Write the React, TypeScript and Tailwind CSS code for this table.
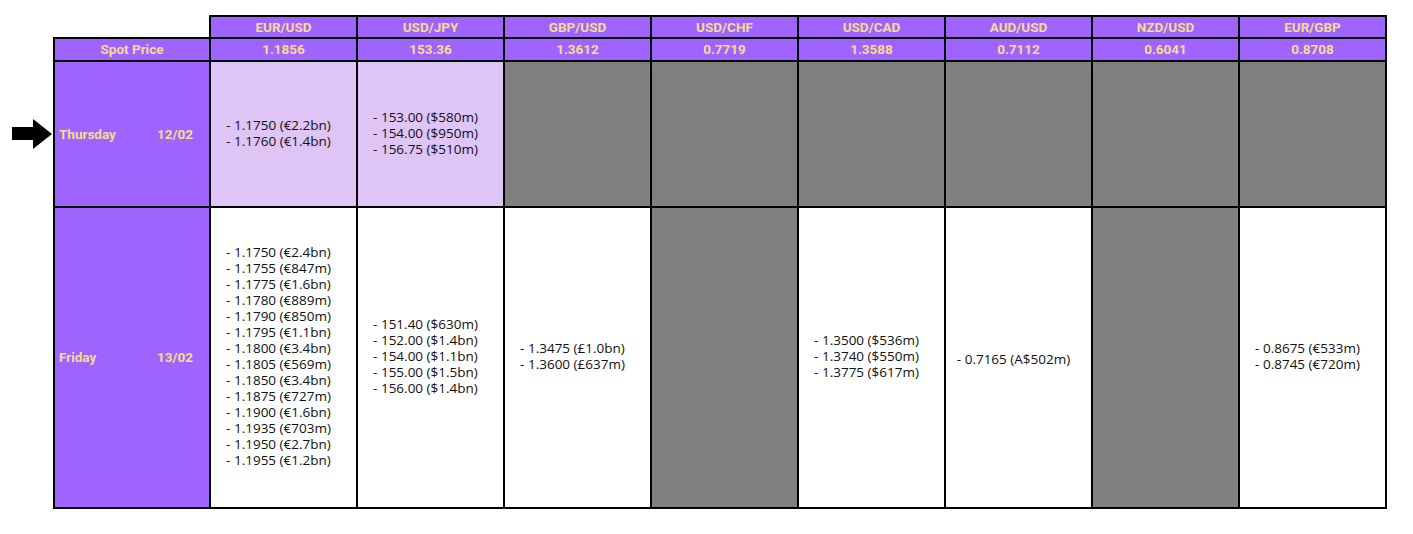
const pairs = [
  { pair: "EUR/USD", spot: "1.1856" },
  { pair: "USD/JPY", spot: "153.36" },
  { pair: "GBP/USD", spot: "1.3612" },
  { pair: "USD/CHF", spot: "0.7719" },
  { pair: "USD/CAD", spot: "1.3588" },
  { pair: "AUD/USD", spot: "0.7112" },
  { pair: "NZD/USD", spot: "0.6041" },
  { pair: "EUR/GBP", spot: "0.8708" },
]

// null = no expiries (grey cell)
const rows: { day: string; date: string; arrow?: boolean; height: string; cells: (string[] | null)[] }[] = [
  {
    day: "Thursday",
    date: "12/02",
    arrow: true,
    height: "h-[146px]",
    cells: [
      ["1.1750 (€2.2bn)", "1.1760 (€1.4bn)"],
      ["153.00 ($580m)", "154.00 ($950m)", "156.75 ($510m)"],
      null,
      null,
      null,
      null,
      null,
      null,
    ],
  },
  {
    day: "Friday",
    date: "13/02",
    height: "h-[301px]",
    cells: [
      [
        "1.1750 (€2.4bn)",
        "1.1755 (€847m)",
        "1.1775 (€1.6bn)",
        "1.1780 (€889m)",
        "1.1790 (€850m)",
        "1.1795 (€1.1bn)",
        "1.1800 (€3.4bn)",
        "1.1805 (€569m)",
        "1.1850 (€3.4bn)",
        "1.1875 (€727m)",
        "1.1900 (€1.6bn)",
        "1.1935 (€703m)",
        "1.1950 (€2.7bn)",
        "1.1955 (€1.2bn)",
      ],
      ["151.40 ($630m)", "152.00 ($1.4bn)", "154.00 ($1.1bn)", "155.00 ($1.5bn)", "156.00 ($1.4bn)"],
      ["1.3475 (£1.0bn)", "1.3600 (£637m)"],
      null,
      ["1.3500 ($536m)", "1.3740 ($550m)", "1.3775 ($617m)"],
      ["0.7165 (A$502m)"],
      null,
      ["0.8675 (€533m)", "0.8745 (€720m)"],
    ],
  },
]

function Arrow() {
  return (
    <svg width="40" height="30" viewBox="0 0 40 30" className="ml-auto mr-[1px]">
      <polygon points="0,8 21,8 21,0 40,15 21,30 21,21 0,21" fill="#000" />
    </svg>
  )
}

export default function App() {
  return (
    <div className="min-h-[534px] bg-white pt-[15px] font-['Open_Sans',sans-serif]">
      <table className="table-fixed border-collapse">
        <colgroup>
          <col className="w-[54px]" />
          <col className="w-[156px]" />
          {pairs.map((p) => (
            <col key={p.pair} className="w-[147px]" />
          ))}
        </colgroup>
        <thead className="font-['Roboto',sans-serif] text-[13.5px] font-bold text-[#f6dc8c]">
          <tr className="h-[22px]">
            <th />
            <th />
            {pairs.map((p) => (
              <th key={p.pair} className="border-2 border-black bg-[#a064fe] p-0 pt-[1px] text-center leading-none">
                {p.pair}
              </th>
            ))}
          </tr>
          <tr className="h-[23px]">
            <th />
            <th className="border-2 border-black bg-[#a064fe] p-0 text-center leading-none">Spot Price</th>
            {pairs.map((p) => (
              <th key={p.pair} className="border-2 border-black bg-[#a064fe] p-0 text-center leading-none">
                {p.spot}
              </th>
            ))}
          </tr>
        </thead>
        <tbody>
          {rows.map((r) => (
            <tr key={r.day} className={r.height}>
              <td className="p-0 align-middle">{r.arrow && <Arrow />}</td>
              <td className="border-2 border-black bg-[#a064fe] p-0 align-middle">
                <div className="flex justify-between pl-[4px] pr-[16px] font-['Roboto',sans-serif] text-[13.5px] font-bold text-[#f6dc8c]">
                  <span>{r.day}</span>
                  <span>{r.date}</span>
                </div>
              </td>
              {r.cells.map((c, i) => {
                const bg = c === null ? "bg-[#808080]" : r.arrow ? "bg-[#dfc4f6]" : "bg-white"
                return (
                  <td key={i} className={`border-2 border-black p-0 pr-[10px] text-center align-middle ${bg}`}>
                    {c && (
                      <div className="inline-block text-left text-[13.5px] leading-4 text-[#111]">
                        {c.map((line) => (
                          <div key={line} className="whitespace-nowrap">
                            - {line}
                          </div>
                        ))}
                      </div>
                    )}
                  </td>
                )
              })}
            </tr>
          ))}
        </tbody>
      </table>
    </div>
  )
}
